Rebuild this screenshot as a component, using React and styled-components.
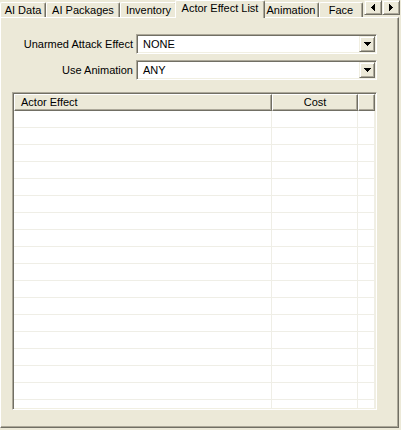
import React from "react";
import styled, { createGlobalStyle } from "styled-components";

const Global = createGlobalStyle`
  body {
    margin: 0;
    background: #ECE9D8;
  }
`;

const Root = styled.div`
  width: 401px;
  height: 430px;
  background: #ECE9D8;
  font-family: "Liberation Sans", Arial, sans-serif;
  font-size: 11px;
  color: #000;
  overflow: hidden;
`;

const TabStrip = styled.div`
  display: flex;
  align-items: flex-end;
  height: 17px;
  position: relative;
  z-index: 1;
`;

const Tab = styled.div`
  box-sizing: border-box;
  width: ${(p) => (p.$active ? p.$w + 4 : p.$w)}px;
  height: ${(p) => (p.$active ? 18 : 15)}px;
  margin: 0 ${(p) => (p.$active ? -2 : 0)}px ${(p) => (p.$active ? -1 : 0)}px;
  padding-bottom: ${(p) => (p.$active ? 3 : 1)}px;
  position: relative;
  z-index: ${(p) => (p.$active ? 2 : 0)};
  display: flex;
  align-items: center;
  justify-content: center;
  white-space: nowrap;
  background: #ECE9D8;
  border-top: 1px solid #fff;
  border-left: 1px solid #fff;
  border-right: 1px solid #716F64;
  box-shadow: inset -1px 0 #ACA899;
  border-radius: 2px 2px 0 0;
`;

const Scroller = styled.div`
  display: flex;
  margin-left: auto;
  align-self: flex-start;
  padding-right: 1px;
`;

const ScrollBtn = styled.div`
  box-sizing: border-box;
  width: 18px;
  height: 15px;
  display: flex;
  align-items: center;
  justify-content: center;
  background: #ECE9D8;
  border-top: 1px solid #F1EFE2;
  border-left: 1px solid #F1EFE2;
  border-right: 1px solid #716F64;
  border-bottom: 1px solid #716F64;
  box-shadow: inset 1px 1px #fff, inset -1px -1px #ACA899;
`;

const Panel = styled.div`
  box-sizing: border-box;
  width: 399px;
  height: 411px;
  border-top: 1px solid #fff;
  border-left: 1px solid #fff;
  border-right: 1px solid #716F64;
  border-bottom: 1px solid #716F64;
  box-shadow: inset -1px -1px #ACA899;
  padding-top: 16px;
  display: flex;
  flex-direction: column;
`;

const Form = styled.div`
  display: grid;
  grid-template-columns: 132px 241px;
  column-gap: 3px;
  row-gap: 6px;
  align-items: center;
`;

const Label = styled.div`
  text-align: right;
  white-space: nowrap;
`;

const Combo = styled.div`
  box-sizing: border-box;
  height: 20px;
  display: flex;
  align-items: center;
  padding: 1px;
  background: #fff;
  border: 1px solid;
  border-color: #ACA899 #fff #fff #ACA899;
  box-shadow: inset 1px 1px #716F64, inset -1px -1px #F1EFE2;
`;

const ComboValue = styled.div`
  flex: 1;
  padding-left: 5px;
`;

const DropBtn = styled(ScrollBtn)`
  width: 16px;
  height: 16px;
`;

const List = styled.div`
  box-sizing: border-box;
  width: 365px;
  height: 318px;
  margin: 12px 0 0 11px;
  background: #fff;
  border: 1px solid;
  border-color: #ACA899 #fff #fff #ACA899;
  box-shadow: inset 1px 1px #716F64, inset -1px -1px #F1EFE2;
  padding: 1px;
  overflow: hidden;
`;

const Columns = styled.div`
  display: grid;
  grid-template-columns: 258px 86px 1fr;
`;

const HeaderCell = styled.div`
  box-sizing: border-box;
  height: 17px;
  display: flex;
  align-items: center;
  justify-content: ${(p) => (p.$center ? "center" : "flex-start")};
  padding: 0 6px 1px;
  background: #ECE9D8;
  border-top: 1px solid #fff;
  border-left: 1px solid #fff;
  border-right: 1px solid #716F64;
  border-bottom: 1px solid #716F64;
  box-shadow: inset -1px -1px #ACA899;
`;

const Cell = styled.div`
  box-sizing: border-box;
  height: 17px;
  border-bottom: 1px solid #EFEEE6;
  border-right: 1px solid #EFEEE6;
`;

const Arrow = ({ d, w, h }) => (
  <svg width={w} height={h} viewBox={`0 0 ${w} ${h}`} shapeRendering="crispEdges">
    <path d={d} fill="#000" />
  </svg>
);

const DOWN = "M0 0h7v1h-1v1h-1v1h-1v1h-1v-1h-1v-1h-1v-1h-1z";
const LEFT = "M0 3h1v-1h1v-1h1v-1h1v7h-1v-1h-1v-1h-1v-1h-1z";
const RIGHT = "M4 3h-1v-1h-1v-1h-1v-1h-1v7h1v-1h1v-1h1v-1h1z";

const tabs = [
  { label: "AI Data", w: 46 },
  { label: "AI Packages", w: 74 },
  { label: "Inventory", w: 57 },
  { label: "Actor Effect List", w: 86, active: true },
  { label: "Animation", w: 56 },
  { label: "Face", w: 44 },
];

export default function App() {
  const rows = Array.from({ length: 18 });

  return (
    <Root>
      <Global />
      <TabStrip>
        {tabs.map((t) => (
          <Tab key={t.label} $w={t.w} $active={t.active}>
            {t.label}
          </Tab>
        ))}
        <Scroller>
          <ScrollBtn>
            <Arrow d={LEFT} w={4} h={7} />
          </ScrollBtn>
          <ScrollBtn>
            <Arrow d={RIGHT} w={4} h={7} />
          </ScrollBtn>
        </Scroller>
      </TabStrip>

      <Panel>
        <Form>
          <Label>Unarmed Attack Effect</Label>
          <Combo>
            <ComboValue>NONE</ComboValue>
            <DropBtn>
              <Arrow d={DOWN} w={7} h={4} />
            </DropBtn>
          </Combo>
          <Label>Use Animation</Label>
          <Combo>
            <ComboValue>ANY</ComboValue>
            <DropBtn>
              <Arrow d={DOWN} w={7} h={4} />
            </DropBtn>
          </Combo>
        </Form>

        <List>
          <Columns>
            <HeaderCell>Actor Effect</HeaderCell>
            <HeaderCell $center>Cost</HeaderCell>
            <HeaderCell />
          </Columns>
          {rows.map((_, i) => (
            <Columns key={i}>
              <Cell />
              <Cell />
              <Cell />
            </Columns>
          ))}
        </List>
      </Panel>
    </Root>
  );
}
